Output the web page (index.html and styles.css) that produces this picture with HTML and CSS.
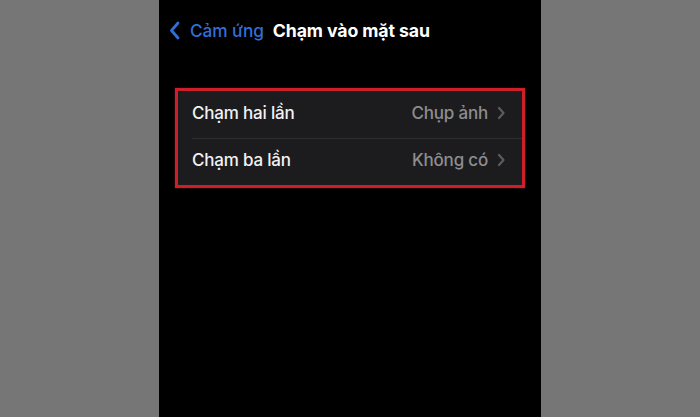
FILE: index.html
```html
<!DOCTYPE html>
<html lang="vi">
<head>
<meta charset="utf-8">
<title>Chạm vào mặt sau</title>
<link rel="stylesheet" href="styles.css">
</head>
<body>
<div class="phone">
  <header class="nav">
    <div class="back">
      <svg class="back-icon" width="11" height="19" viewBox="0 0 11 19"><path d="M9 2 L2.5 9.5 L9 17" fill="none" stroke="#2f6fd6" stroke-width="2.8" stroke-linecap="round" stroke-linejoin="round"/></svg>
      <span class="back-label">Cảm ứng</span>
    </div>
    <h1 class="title">Chạm vào mặt sau</h1>
  </header>
  <div class="highlight">
    <ul class="group">
      <li class="row">
        <span class="label">Chạm hai lần</span>
        <span class="value">Chụp ảnh</span>
        <svg class="chev" width="9" height="14" viewBox="0 0 9 14"><path d="M2 2 L6.5 7 L2 12" fill="none" stroke="#5b5b60" stroke-width="2.2" stroke-linecap="round" stroke-linejoin="round"/></svg>
      </li>
      <li class="row">
        <span class="label">Chạm ba lần</span>
        <span class="value">Không có</span>
        <svg class="chev" width="9" height="14" viewBox="0 0 9 14"><path d="M2 2 L6.5 7 L2 12" fill="none" stroke="#5b5b60" stroke-width="2.2" stroke-linecap="round" stroke-linejoin="round"/></svg>
      </li>
    </ul>
  </div>
</div>
</body>
</html>
```

FILE: styles.css
```css
html, body {
  margin: 0;
  padding: 0;
}
body {
  background: #767676;
  width: 700px;
  height: 417px;
  overflow: hidden;
  display: flex;
  justify-content: center;
  font-family: Inter, "Noto Sans", "DejaVu Sans", sans-serif;
}
.phone {
  width: 382px;
  height: 417px;
  background: #000;
  display: flex;
  flex-direction: column;
}
.nav {
  display: flex;
  align-items: center;
  height: 22px;
  margin-top: 19px;
  padding-left: 10px;
}
.back {
  display: flex;
  align-items: center;
}
.back-icon {
  display: block;
}
.back-label {
  margin-left: 10px;
  color: #2f6fd6;
  font-size: 17.3px;
  font-weight: 500;
  letter-spacing: -0.1px;
}
.title {
  margin: 0 0 0 9px;
  color: #fff;
  font-size: 17.7px;
  font-weight: 700;
  letter-spacing: -0.1px;
}
.highlight {
  margin: 47px 0 0 16px;
  width: 344px;
  border: 3px solid #cc1f29;
  box-shadow: 0 0 1px #cc1f29;
}
.group {
  list-style: none;
  margin: 0;
  padding: 0;
  background: #1c1c1e;
}
.row {
  display: flex;
  align-items: center;
  height: 47px;
  padding: 0 16px 3px 14px;
  box-sizing: border-box;
  position: relative;
}
.row + .row::before {
  content: "";
  position: absolute;
  top: 0;
  left: 14px;
  right: 0;
  height: 1px;
  background: #2e2e31;
}
.label {
  flex: 1;
  color: #f2f2f2;
  font-size: 17px;
  font-weight: 500;
  letter-spacing: -0.2px;
}
.value {
  color: #8d8d92;
  font-size: 17px;
  font-weight: 500;
  letter-spacing: -0.2px;
  margin-right: 9px;
}
.chev {
  display: block;
}
```
